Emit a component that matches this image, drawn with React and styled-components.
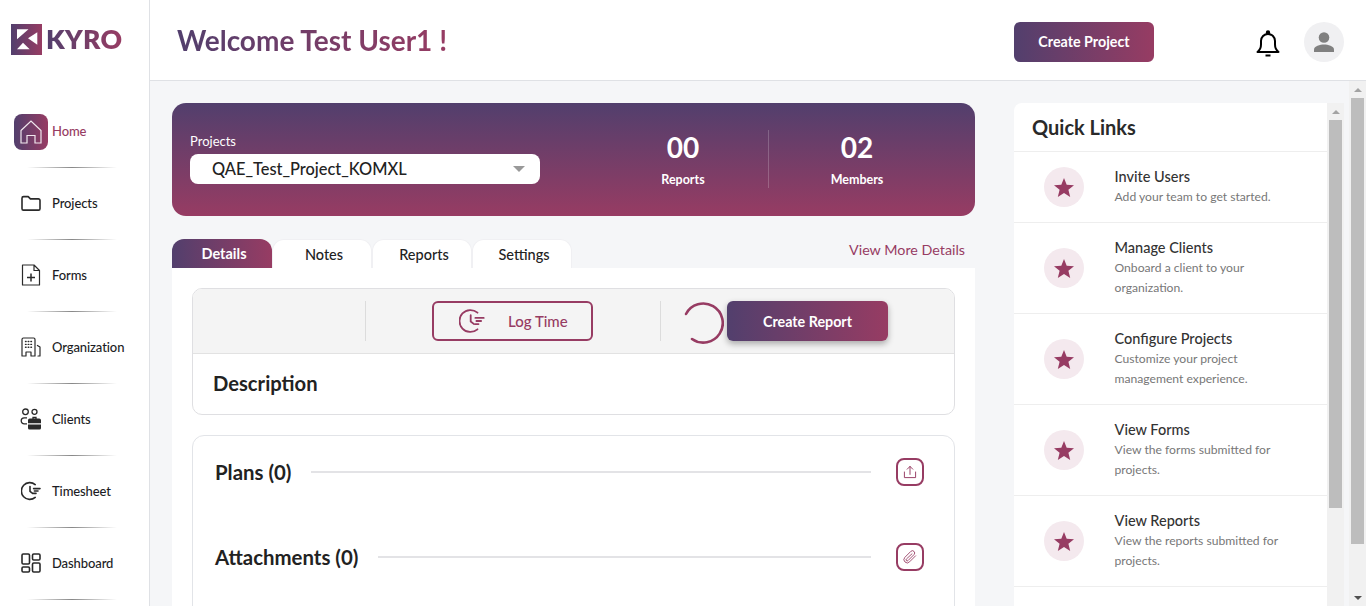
import React from "react";
import styled, { createGlobalStyle } from "styled-components";

const plum = "#973c63";
const grape = "#523f6d";
const sideways = `linear-gradient(90deg, ${grape}, ${plum})`;

const GlobalStyle = createGlobalStyle`
  html, body { margin: 0; height: 100%; overflow: hidden; }
  body { font-family: Lato, "Open Sans", sans-serif; color: #222; background: #fff; }
  #root { height: 100%; }
  * { box-sizing: border-box; }
`;

const Shell = styled.div`
  display: flex;
  height: 100vh;
`;

const Sidebar = styled.aside`
  width: 150px;
  flex: none;
  border-right: 1px solid #dfe1e5;
  background: #fff;
`;

const Logo = styled.div`
  display: flex;
  align-items: center;
  height: 96px;
  padding: 0 0 17px 11px;
  gap: 4px;
`;

const LogoWord = styled.span`
  font-size: 26.5px;
  font-weight: 800;
  letter-spacing: 0.3px;
  line-height: 1;
  background: ${sideways};
  -webkit-background-clip: text;
  background-clip: text;
  color: transparent;
`;

const Nav = styled.nav`
  display: flex;
  flex-direction: column;
`;

const NavItem = styled.a`
  position: relative;
  display: flex;
  align-items: center;
  height: 72px;
  padding: 0 0 2px 14px;
  font-size: 13px;
  font-weight: 500;
  letter-spacing: -0.1px;
  color: ${({ $active }) => ($active ? plum : "#1c1c24")};
  &::after {
    content: "";
    position: absolute;
    left: 27px;
    bottom: 0;
    width: 90px;
    height: 1px;
    background: linear-gradient(90deg, transparent, #888, transparent);
  }
`;

const NavIcon = styled.span`
  width: 34px;
  height: 36px;
  margin: ${({ $active }) => ($active ? "2px 4px 0 0" : "0 4px 0 0")};
  display: flex;
  align-items: center;
  justify-content: center;
  border-radius: 8px;
  color: ${({ $active }) => ($active ? "#f1e8ee" : "#2a2a2a")};
  background: ${({ $active }) => ($active ? sideways : "transparent")};
`;

const Column = styled.div`
  flex: 1;
  min-width: 0;
  display: flex;
  flex-direction: column;
`;

const Header = styled.header`
  height: 81px;
  flex: none;
  display: flex;
  align-items: center;
  padding: 0 22px 1px 27px;
  background: #fff;
  border-bottom: 1px solid #dfe1e5;
`;

const Welcome = styled.h1`
  margin: 0;
  flex: 1;
  font-size: 28px;
  font-weight: 700;
  span {
    background: ${sideways};
    -webkit-background-clip: text;
    background-clip: text;
    color: transparent;
  }
`;

const HeaderActions = styled.div`
  display: flex;
  align-items: center;
  padding-top: 4px;
`;

const GradientButton = styled.button`
  width: ${({ $width }) => $width}px;
  height: 40px;
  flex: none;
  border: 0;
  border-radius: 6px;
  background: ${sideways};
  color: #fff;
  font: 700 14.3px Lato, sans-serif;
  box-shadow: ${({ $raised }) => ($raised ? "0 3px 6px rgba(0,0,0,.3)" : "none")};
`;

const BellSlot = styled.span`
  display: flex;
  margin: 4px 24px 0 102px;
`;

const Avatar = styled.span`
  width: 40px;
  height: 40px;
  border-radius: 50%;
  background: #f0f0f2;
  display: flex;
  align-items: center;
  justify-content: center;
`;

const Main = styled.main`
  flex: 1;
  min-height: 0;
  display: flex;
  background: #f5f6f8;
`;

const MainGrid = styled.div`
  flex: 1;
  min-width: 0;
  overflow: hidden;
  display: flex;
  align-items: flex-start;
  gap: 39px;
  padding: 22px 5px 0 22px;
`;

const Rail = styled.div`
  width: 17px;
  flex: none;
  background: #f1f1f1;
  display: flex;
  flex-direction: column;
  align-items: center;
`;

const RailArrow = styled.span`
  height: 17px;
  flex: none;
  display: flex;
  align-items: center;
  justify-content: center;
  &::before {
    content: "";
    border-left: 4px solid transparent;
    border-right: 4px solid transparent;
    border-bottom: ${({ $down }) => ($down ? "0" : "4px solid #a3a3a3")};
    border-top: ${({ $down }) => ($down ? "4px solid #505050" : "0")};
  }
`;

const RailThumb = styled.span`
  width: 13px;
  height: ${({ $length }) => $length}px;
  flex: none;
  background: #bdbdbd;
`;

const RailGap = styled.span`
  flex: 1;
`;

const Left = styled.section`
  width: 803px;
  flex: none;
`;

const Banner = styled.div`
  height: 113px;
  border-radius: 14px;
  background: linear-gradient(180deg, ${grape}, ${plum});
  display: flex;
  align-items: center;
  padding: 0 0 2px 18px;
  color: #fff;
`;

const Picker = styled.div`
  width: 350px;
  label { display: block; font-size: 13px; margin-bottom: 5px; line-height: 15px; }
`;

const Select = styled.div`
  height: 30px;
  border-radius: 8px;
  background: #fff;
  color: #222;
  display: flex;
  align-items: center;
  justify-content: space-between;
  padding: 0 15px 0 22px;
  font-size: 16.4px;
  font-weight: 500;
  &::after {
    content: "";
    border-left: 6px solid transparent;
    border-right: 6px solid transparent;
    border-top: 6px solid #999;
  }
`;

const Stat = styled.div`
  width: ${({ $width }) => $width}px;
  margin-left: ${({ $offset }) => $offset}px;
  height: 58px;
  text-align: center;
  border-right: ${({ $divided }) => ($divided ? "1px solid rgba(255,255,255,.2)" : "0")};
  strong { display: block; font-size: 28px; line-height: 34px; font-weight: 700; }
  small { display: block; font-size: 12.5px; font-weight: 700; line-height: 16px; margin-top: 8px; }
`;

const TabRow = styled.div`
  display: flex;
  align-items: center;
  margin-top: 23px;
  height: 29px;
`;

const Tab = styled.div`
  width: 100px;
  height: 29px;
  padding-left: 4px;
  display: flex;
  align-items: center;
  justify-content: center;
  font-size: 14.5px;
  font-weight: ${({ $active }) => ($active ? 700 : 500)};
  color: ${({ $active }) => ($active ? "#fff" : "#222")};
  background: ${({ $active }) => ($active ? sideways : "#fff")};
  border-radius: 12px 12px 0 0;
  border: ${({ $active }) => ($active ? "0" : "1px solid #f0f0f3")};
  border-bottom: 0;
`;

const MoreLink = styled.a`
  margin: -8px 10px 0 auto;
  font-size: 14.3px;
  color: ${plum};
`;

const Body = styled.div`
  background: #fff;
  padding: 20px;
`;

const Card = styled.div`
  border: 1px solid #dfdfe2;
  border-radius: 10px;
  overflow: hidden;
`;

const Toolbar = styled.div`
  height: 65px;
  display: flex;
  align-items: center;
  background: #f4f4f4;
  border-bottom: 1px solid #e2e2e2;
  padding-left: 172px;
`;

const Rule = styled.span`
  width: 1px;
  height: 40px;
  background: #dcdcdc;
  margin-right: ${({ $after }) => $after}px;
`;

const LogTime = styled.button`
  width: 161px;
  height: 40px;
  margin-right: 67px;
  border: 2px solid ${plum};
  border-radius: 6px;
  background: transparent;
  color: ${plum};
  font: 500 15px Lato, sans-serif;
  display: flex;
  align-items: center;
  gap: 23px;
  padding-left: 25px;
`;

const Spinner = styled.svg`
  width: 42px;
  height: 42px;
  margin: 3px 3px 0 0;
  flex: none;
`;

const Description = styled.h3`
  margin: 0;
  height: 60px;
  padding: 0 0 2px 20px;
  display: flex;
  align-items: center;
  font-size: 20.2px;
  font-weight: 700;
  color: #222;
`;

const FileCard = styled.div`
  margin-top: 20px;
  height: 205px;
  border: 1px solid #e2e4e8;
  border-radius: 12px;
  padding: 22px 30px 0 22px;
`;

const FileRow = styled.div`
  display: flex;
  align-items: center;
  height: 28px;
  margin-bottom: 57px;
  h4 { margin: 0 20px 0 0; font-size: 20.4px; font-weight: 700; color: #222; white-space: nowrap; }
  i { flex: 1; height: 2px; background: #e3e3e6; }
`;

const SquareIcon = styled.span`
  width: 28px;
  height: 28px;
  flex: none;
  margin-left: 25px;
  border: 2px solid ${plum};
  border-radius: 8px;
  display: flex;
  align-items: center;
  justify-content: center;
  color: ${plum};
`;

const Links = styled.aside`
  width: 330px;
  height: 556px;
  flex: none;
  display: flex;
`;

const LinksList = styled.div`
  flex: 1;
  min-width: 0;
  overflow: hidden;
  background: #fff;
  border-radius: 8px 0 0 0;
`;

const LinksTitle = styled.h2`
  margin: 0;
  height: 49px;
  padding-left: 18px;
  display: flex;
  align-items: center;
  font-size: 20px;
  font-weight: 700;
  color: #2a2a2a;
  border-bottom: 1px solid #eee;
`;

const LinkRow = styled.div`
  display: flex;
  align-items: center;
  min-height: ${({ $short }) => ($short ? 71 : 91)}px;
  padding: 0 40px 0 30px;
  border-bottom: 1px solid #eee;
`;

const StarBadge = styled.span`
  width: 40px;
  height: 40px;
  flex: none;
  margin-right: 30.5px;
  border-radius: 50%;
  background: #f4e9ee;
  display: flex;
  align-items: center;
  justify-content: center;
`;

const LinkText = styled.div`
  b { display: block; font-size: 14.5px; font-weight: 500; color: #333; line-height: 20px; }
  p { margin: 0; font-size: 12.15px; color: #777; line-height: 20px; }
`;

const Line = ({ children, size = 20, sw = 1.6 }) => (
  <svg width={size} height={size} viewBox="0 0 20 20" fill="none" stroke="currentColor" strokeWidth={sw} strokeLinecap="round" strokeLinejoin="round">
    {children}
  </svg>
);

const Clock = ({ size = 20, sw = 1.6 }) => (
  <Line size={size} sw={sw}>
    <path d="M14.200 3.600A8.400 8.400 0 1 0 14.200 16.400" />
    <path d="M9 5.600V10.400L11.600 12.400" />
    <path d="M12.600 7.600H19M13.400 10H17M12.600 12.400H15" />
  </Line>
);

const navItems = [
  {
    label: "Home",
    active: true,
    icon: (
      <svg width="22" height="24" viewBox="0 0 22 24" fill="none" stroke="currentColor" strokeWidth="1.200">
        <path d="M1 10.500 11 1l10 9.500V23h-6v-7.500H7V23H1z" />
      </svg>
    ),
  },
  {
    label: "Projects",
    icon: (
      <Line>
        <path d="M1 5.200a1.600 1.600 0 0 1 1.600-1.600h4.600l2.200 2.300h8a1.600 1.600 0 0 1 1.600 1.600v8.200a1.400 1.400 0 0 1-1.400 1.400H2.400A1.400 1.400 0 0 1 1 15.700z" />
      </Line>
    ),
  },
  {
    label: "Forms",
    icon: (
      <svg width="20" height="22" viewBox="0 0 20 22" fill="none" stroke="currentColor" strokeWidth="1.200" strokeLinejoin="round">
        <path d="M1.500 1h11.500l5.500 5.500V21h-17zM13 1v5.500h5.500" />
        <path d="M10 9.500v8M6 13.500h8" strokeWidth="1.500" />
      </svg>
    ),
  },
  {
    label: "Organization",
    icon: (
      <Line sw={1.200}>
        <path d="M1 19V2.400A1.400 1.400 0 0 1 2.400 1h10.200a1.400 1.400 0 0 1 1.400 1.400V19h-4v-4H5v4zM16.400 8.500 19 10v9h-2" />
        <path d="M4.500 4.500h.6M7.200 4.500h.6M9.900 4.500h.6M4.500 7.400h.6M7.200 7.400h.6M9.900 7.400h.6M4.500 10.300h.6M7.200 10.300h.6M9.900 10.300h.6" strokeWidth="1.400" />
      </Line>
    ),
  },
  {
    label: "Clients",
    icon: (
      <svg width="22" height="22" viewBox="0 0 22 22" fill="none" stroke="currentColor" strokeWidth="1.300">
        <circle cx="5.500" cy="3.800" r="2.800" />
        <path d="M7 9.800H4.200a3 3 0 0 0 0 6H7" />
        <circle cx="14.500" cy="3.800" r="2.500" />
        <path d="M13 11V9.500h3V11" />
        <path d="M8 12.200a1.800 1.800 0 0 1 1.800-1.800h9.400a1.800 1.800 0 0 1 1.800 1.800v3H8zM8 16.400h13v3.600a1.500 1.500 0 0 1-1.500 1.500h-10A1.500 1.500 0 0 1 8 20z" fill="currentColor" stroke="none" />
      </svg>
    ),
  },
  { label: "Timesheet", icon: <Clock /> },
  {
    label: "Dashboard",
    icon: (
      <Line sw={1.600}>
        <rect x="1" y="1" width="7.500" height="10" rx="1.200" />
        <rect x="11.500" y="1" width="7.500" height="6" rx="1.200" />
        <rect x="1" y="14" width="7.500" height="5" rx="1.200" />
        <rect x="11.500" y="10" width="7.500" height="9" rx="1.200" />
      </Line>
    ),
  },
];

const links = [
  { title: "Invite Users", text: "Add your team to get started.", short: true },
  { title: "Manage Clients", text: "Onboard a client to your organization." },
  { title: "Configure Projects", text: "Customize your project management experience." },
  { title: "View Forms", text: "View the forms submitted for projects." },
  { title: "View Reports", text: "View the reports submitted for projects." },
];

const Star = () => (
  <svg width="20" height="19" viewBox="0 0 20 19" fill={plum}>
    <path d="M10 0l2.700 6.700 7.300.5-5.600 4.600 1.800 7.200L10 15.100 3.800 19l1.800-7.200L0 7.200l7.300-.5z" />
  </svg>
);

const App = () => (
  <Shell>
    <GlobalStyle />
    <Sidebar>
      <Logo>
        <svg width="31" height="31" viewBox="0 0 31 31">
          <defs>
            <linearGradient id="mark">
              <stop offset="0" stopColor={grape} />
              <stop offset="1" stopColor={plum} />
            </linearGradient>
          </defs>
          <rect width="31" height="31" fill="url(#mark)" />
          <path d="M6 5.300h11.500L6 15.300zM26.300 8.300v12.400L17 14.300zM6 25.300 12 18.700l6.700 6.600z" fill="#fff" />
        </svg>
        <LogoWord>KYRO</LogoWord>
      </Logo>
      <Nav>
        {navItems.map((item) => (
          <NavItem key={item.label} $active={item.active}>
            <NavIcon $active={item.active}>{item.icon}</NavIcon>
            {item.label}
          </NavItem>
        ))}
      </Nav>
    </Sidebar>
    <Column>
      <Header>
        <Welcome>
          <span>Welcome Test User1 !</span>
        </Welcome>
        <HeaderActions>
          <GradientButton $width={140}>Create Project</GradientButton>
          <BellSlot>
            <svg width="24" height="27" viewBox="0 0 24 27" fill="none" stroke="#000" strokeWidth="2">
              <path d="M1.500 22c2.500-2 3.500-4 3.500-7.500V11a7 7 0 0 1 14 0v3.500c0 3.500 1 5.500 3.500 7.500z" strokeLinejoin="round" />
              <circle cx="12" cy="2.500" r="1.200" fill="#000" />
              <path d="M9.500 25.500h5" />
            </svg>
          </BellSlot>
          <Avatar>
            <svg width="22" height="20" viewBox="0 0 22 20" fill="#808080">
              <circle cx="11" cy="5.500" r="5.300" />
              <path d="M1 20v-2.500c0-3.500 6-5 10-5s10 1.500 10 5V20z" />
            </svg>
          </Avatar>
        </HeaderActions>
      </Header>
      <Main>
        <MainGrid>
          <Left>
            <Banner>
              <Picker>
                <label>Projects</label>
                <Select>QAE_Test_Project_KOMXL</Select>
              </Picker>
              <Stat $width={171} $offset={58} $divided>
                <strong>00</strong>
                <small>Reports</small>
              </Stat>
              <Stat $width={176}>
                <strong>02</strong>
                <small>Members</small>
              </Stat>
            </Banner>
            <TabRow>
              <Tab $active>Details</Tab>
              <Tab>Notes</Tab>
              <Tab>Reports</Tab>
              <Tab>Settings</Tab>
              <MoreLink>View More Details</MoreLink>
            </TabRow>
            <Body>
              <Card>
                <Toolbar>
                  <Rule $after={66} />
                  <LogTime>
                    <Clock size={26} sw={1.400} />
                    Log Time
                  </LogTime>
                  <Rule $after={21} />
                  <Spinner viewBox="0 0 42 42" fill="none" stroke={plum} strokeWidth="2.600">
                    <path d="M4 12A19.500 19.500 0 1 1 10 37" strokeLinecap="round" />
                  </Spinner>
                  <GradientButton $width={161} $raised>Create Report</GradientButton>
                </Toolbar>
                <Description>Description</Description>
              </Card>
              <FileCard>
                <FileRow>
                  <h4>Plans (0)</h4>
                  <i />
                  <SquareIcon>
                    <Line size={16} sw={1.200}>
                      <path d="M3 10v7h14v-7M10 13V3M6.500 6.500 10 3l3.500 3.500" />
                    </Line>
                  </SquareIcon>
                </FileRow>
                <FileRow>
                  <h4>Attachments (0)</h4>
                  <i />
                  <SquareIcon>
                    <Line size={16} sw={1.100}>
                      <path d="M17 8.500 9.500 16a4 4 0 0 1-6-5.500L11 3a2.800 2.800 0 0 1 4 4l-7.500 7.500a1.400 1.400 0 0 1-2-2L12.500 6" />
                    </Line>
                  </SquareIcon>
                </FileRow>
              </FileCard>
            </Body>
          </Left>
          <Links>
            <LinksList>
              <LinksTitle>Quick Links</LinksTitle>
              {links.map((link) => (
                <LinkRow key={link.title} $short={link.short}>
                  <StarBadge>
                    <Star />
                  </StarBadge>
                  <LinkText>
                    <b>{link.title}</b>
                    <p>{link.text}</p>
                  </LinkText>
                </LinkRow>
              ))}
              <LinkRow>
                <StarBadge>
                  <Star />
                </StarBadge>
              </LinkRow>
            </LinksList>
            <Rail>
              <RailArrow />
              <RailThumb $length={388} />
            </Rail>
          </Links>
        </MainGrid>
        <Rail>
          <RailArrow />
          <RailThumb $length={446} />
          <RailGap />
          <RailArrow $down />
        </Rail>
      </Main>
    </Column>
  </Shell>
);

export default App;
